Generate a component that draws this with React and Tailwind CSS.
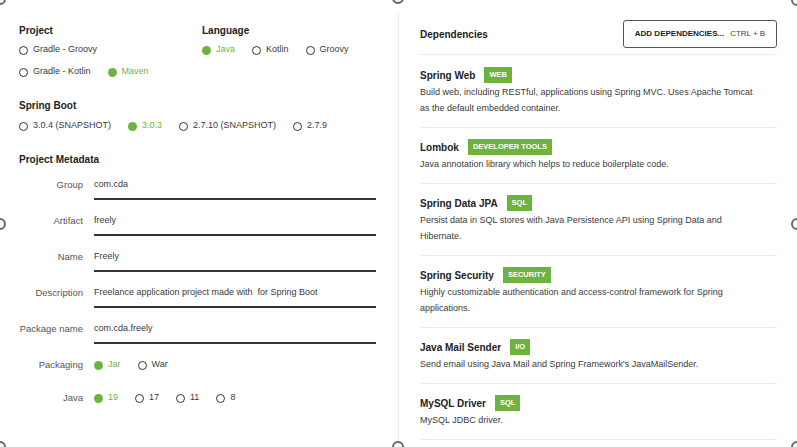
import React from "react";

const font = "font-['Liberation_Sans',Arial,sans-serif]";

function Radio({ label, checked }) {
  return (
    <div className="flex items-center h-[16px]">
      {checked ? (
        <span className="w-[9px] h-[9px] rounded-full bg-[#6db33f]" />
      ) : (
        <span className="w-[9px] h-[9px] rounded-full border-[1.5px] border-[#333]" />
      )}
      <span className={`ml-[5px] text-[9px] whitespace-nowrap ${checked ? "text-[#6db33f]" : "text-[#3a3a3a]"}`}>{label}</span>
    </div>
  );
}

function RadioRow({ items, checked, className = "" }) {
  return (
    <div className={`flex items-center gap-x-[17px] ${className}`}>
      {items.map((it) => (
        <Radio key={it} label={it} checked={it === checked} />
      ))}
    </div>
  );
}

function Heading({ children, className = "" }) {
  return <div className={`h-[16px] flex items-center text-[10px] font-bold text-[#222] ${className}`}>{children}</div>;
}

function Field({ label, value }) {
  return (
    <div className="flex h-[36px]">
      <div className="w-[64px] h-[16px] flex items-center justify-end text-[9.5px] text-[#555] whitespace-nowrap">{label}</div>
      <div className="ml-[11px] w-[282px]">
        <div className="h-[16px] flex items-center text-[9px] text-[#3a3a3a] whitespace-pre">{value}</div>
        <div className="mt-[5px] h-[2px] bg-[#333]" />
      </div>
    </div>
  );
}

function OptionField({ label, items, checked, className = "" }) {
  return (
    <div className={`flex ${className}`}>
      <div className="w-[64px] h-[16px] flex items-center justify-end text-[9.5px] text-[#555] whitespace-nowrap">{label}</div>
      <div className="ml-[11px]">
        <RadioRow items={items} checked={checked} />
      </div>
    </div>
  );
}

function Dep({ title, tag, desc }) {
  return (
    <div className="pt-[11px] pb-[11px] border-b border-[#e6eded]">
      <div className="h-[16px] flex items-center">
        <span className="text-[10px] font-bold text-[#222]">{title}</span>
        <span className="ml-[9px] h-[16px] px-[5px] flex items-center bg-[#6db33f] text-white text-[7.5px] font-bold uppercase">{tag}</span>
      </div>
      <div className="mt-[1px] text-[9px] leading-[16px] text-[#3a3a3a] max-w-[338px]">{desc}</div>
    </div>
  );
}

function Handle({ className }) {
  return <span className={`absolute w-[12px] h-[12px] rounded-full border-2 border-[#666] bg-white ${className}`} />;
}

export default function App() {
  return (
    <div className={`relative w-[797px] h-[447px] bg-white overflow-hidden flex ${font}`}>
      <div className="w-[398px] pl-[19px] pt-[22px]">
        <div className="flex">
          <div className="w-[183px]">
            <Heading>Project</Heading>
            <RadioRow className="mt-[4px]" items={["Gradle - Groovy"]} checked="" />
            <RadioRow className="mt-[6px]" items={["Gradle - Kotlin", "Maven"]} checked="Maven" />
          </div>
          <div>
            <Heading>Language</Heading>
            <RadioRow className="mt-[4px]" items={["Java", "Kotlin", "Groovy"]} checked="Java" />
          </div>
        </div>
        <Heading className="mt-[17px]">Spring Boot</Heading>
        <RadioRow className="mt-[5px]" items={["3.0.4 (SNAPSHOT)", "3.0.3", "2.7.10 (SNAPSHOT)", "2.7.9"]} checked="3.0.3" />
        <Heading className="mt-[17px]">Project Metadata</Heading>
        <div className="mt-[10px]">
          <Field label="Group" value="com.cda" />
          <Field label="Artifact" value="freely" />
          <Field label="Name" value="Freely" />
          <Field label="Description" value="Freelance application project made with  for Spring Boot" />
          <Field label="Package name" value="com.cda.freely" />
          <OptionField label="Packaging" items={["Jar", "War"]} checked="Jar" />
          <OptionField className="mt-[17px]" label="Java" items={["19", "17", "11", "8"]} checked="19" />
        </div>
      </div>
      <div className="w-px bg-[#e6eded] mt-[12px]" />
      <div className="flex-1 pl-[21px] pr-[20px] pt-[20px]">
        <div className="h-[28px] flex items-center justify-between">
          <span className="text-[10px] font-bold text-[#222]">Dependencies</span>
          <div className="w-[154px] h-[28px] border-[1.5px] border-[#555] rounded-[3px] flex items-center justify-center gap-[6px]">
            <span className="text-[8px] font-bold text-[#222]">ADD DEPENDENCIES...</span>
            <span className="text-[8px] text-[#444]">CTRL + B</span>
          </div>
        </div>
        <div className="mt-[6px] border-b border-[#e6eded]" />
        <div className="pt-[1px]">
          <Dep title="Spring Web" tag="Web" desc="Build web, including RESTful, applications using Spring MVC. Uses Apache Tomcat as the default embedded container." />
          <Dep title="Lombok" tag="Developer Tools" desc="Java annotation library which helps to reduce boilerplate code." />
          <Dep title="Spring Data JPA" tag="SQL" desc="Persist data in SQL stores with Java Persistence API using Spring Data and Hibernate." />
          <Dep title="Spring Security" tag="Security" desc="Highly customizable authentication and access-control framework for Spring applications." />
          <Dep title="Java Mail Sender" tag="I/O" desc="Send email using Java Mail and Spring Framework's JavaMailSender." />
          <Dep title="MySQL Driver" tag="SQL" desc="MySQL JDBC driver." />
        </div>
      </div>
      <Handle className="left-[-6px] top-[-7px]" />
      <Handle className="left-[392px] top-[-8px]" />
      <Handle className="left-[791px] top-[-6px]" />
      <Handle className="left-[-6px] top-[218px]" />
      <Handle className="left-[791px] top-[218px]" />
      <Handle className="left-[-6px] top-[441px]" />
      <Handle className="left-[392px] top-[441px]" />
      <Handle className="left-[791px] top-[441px]" />
    </div>
  );
}
